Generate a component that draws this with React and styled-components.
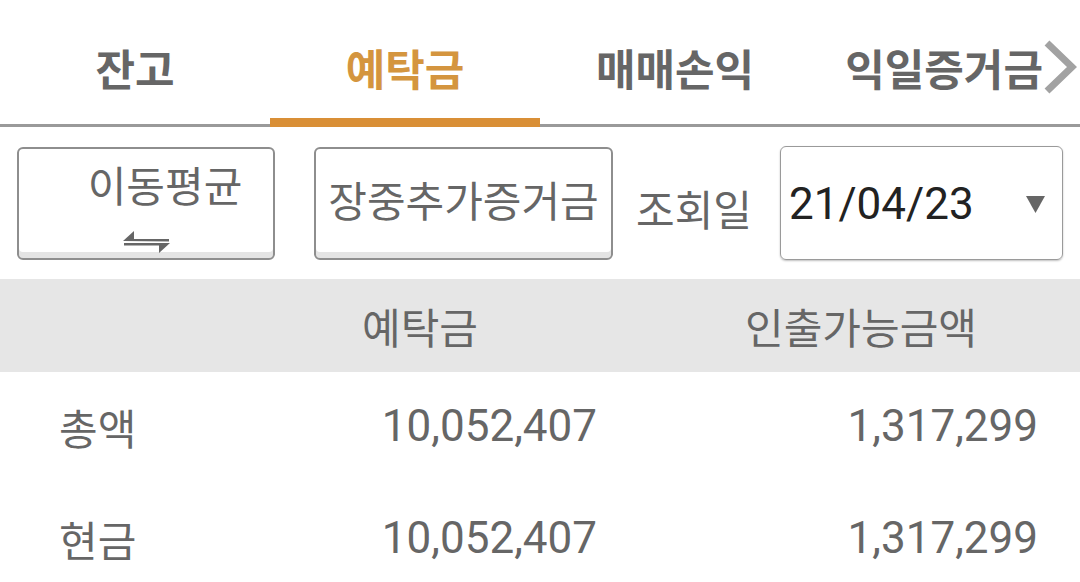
import { Fragment } from "react";
import styled, { createGlobalStyle } from "styled-components";

const GlobalStyle = createGlobalStyle`
  body {
    margin: 0;
    background: #fff;
    font-family: Roboto, "Noto Sans CJK KR", sans-serif;
  }
`;

const StyledPage = styled.div`
  width: 1080px;
  height: 582px;
  overflow: hidden;
  background: #fff;
`;

const StyledTabBar = styled.div`
  display: grid;
  grid-template-columns: repeat(4, 270px);
  height: 124px;
  border-bottom: 3px solid #9a9a9a;
`;

const StyledTab = styled.div`
  position: relative;
  display: flex;
  align-items: center;
  justify-content: ${(props) => (props.last ? "flex-end" : "center")};
  padding: 10px ${(props) => (props.last ? "3px" : "0")} 0 0;
  font-size: 43px;
  font-weight: 700;
  color: ${(props) => (props.active ? "#d4953f" : "#666")};

  &::after {
    content: "";
    display: ${(props) => (props.active ? "block" : "none")};
    position: absolute;
    left: 0;
    right: 0;
    bottom: -3px;
    height: 9px;
    background: #d98f36;
  }
`;

const StyledControls = styled.div`
  display: flex;
  align-items: center;
  padding: 19px 17px;
`;

const StyledButton = styled.div`
  box-sizing: border-box;
  width: ${(props) => props.width}px;
  height: 113px;
  margin-right: ${(props) => props.gap || 0}px;
  border: 2px solid #8e8e8e;
  border-radius: 6px;
  box-shadow: inset 0 -6px 0 #e4e4e4;
  display: flex;
  flex-direction: column;
  align-items: center;
  justify-content: ${(props) => (props.stacked ? "flex-start" : "center")};
  padding-top: ${(props) => (props.stacked ? 18 : 0)}px;
  font-size: 42px;
  color: #666;
  line-height: 1;

  & .label {
    padding-left: ${(props) => props.shift || 0}px;
  }

  & svg {
    margin-top: 22px;
  }
`;

const StyledDateLabel = styled.div`
  margin-left: 23px;
  font-size: 42px;
  color: #666;
  padding-top: 8px;
`;

const StyledDateBox = styled.div`
  box-sizing: border-box;
  margin-left: auto;
  width: 283px;
  height: 114px;
  border: 1px solid #9a9a9a;
  border-radius: 6px;
  box-shadow: 0 1px 2px rgba(0, 0, 0, 0.25);
  display: flex;
  align-items: center;
  justify-content: space-between;
  padding: 2px 17px 0 8px;
  font-size: 44px;
  color: #222;
`;

const StyledTable = styled.div`
  display: grid;
  grid-template-columns: 240px 360px 480px;
`;

const StyledHeadCell = styled.div`
  height: 93px;
  background: #e6e6e6;
  display: flex;
  align-items: center;
  justify-content: center;
  padding-left: ${(props) => props.pad || 0}px;
  font-size: 42px;
  color: #666;
`;

const StyledCell = styled.div`
  height: 112px;
  display: flex;
  align-items: center;
  justify-content: ${(props) => (props.label ? "flex-start" : "flex-end")};
  padding-left: ${(props) => (props.label ? 59 : 0)}px;
  padding-right: ${(props) => props.pad || 0}px;
  padding-bottom: 4px;
  box-sizing: border-box;
  font-size: ${(props) => (props.label ? 42 : 44)}px;
  color: #666;
`;

function Chevron() {
  return (
    <svg width="34" height="54" viewBox="0 0 34 54">
      <polyline points="4,3 29,27 4,51" fill="none" stroke="#a2a2a2" strokeWidth="7" />
    </svg>
  );
}

function SwapArrows() {
  return (
    <svg width="47" height="22" viewBox="0 0 47 22">
      <path d="M0 10 L11 0 L11 8 L46 8 L46 10.5 Z" fill="#666" />
      <path d="M1 12 L47 12 L36 22 L36 14.5 L1 14.5 Z" fill="#666" />
    </svg>
  );
}

function Caret() {
  return (
    <svg width="19" height="17" viewBox="0 0 19 17">
      <polygon points="0,0 19,0 9.5,17" fill="#666" />
    </svg>
  );
}

const rows = [
  { label: "총액", deposit: "10,052,407", withdraw: "1,317,299" },
  { label: "현금", deposit: "10,052,407", withdraw: "1,317,299" },
];

export default function App() {
  return (
    <StyledPage>
      <GlobalStyle />
      <StyledTabBar>
        <StyledTab>잔고</StyledTab>
        <StyledTab active>예탁금</StyledTab>
        <StyledTab>매매손익</StyledTab>
        <StyledTab last>
          익일증거금
          <Chevron />
        </StyledTab>
      </StyledTabBar>

      <StyledControls>
        <StyledButton width={258} gap={39} shift={38} stacked>
          <span className="label">이동평균</span>
          <SwapArrows />
        </StyledButton>
        <StyledButton width={299}>
          <span className="label">장중추가증거금</span>
        </StyledButton>
        <StyledDateLabel>조회일</StyledDateLabel>
        <StyledDateBox>
          <span>21/04/23</span>
          <Caret />
        </StyledDateBox>
      </StyledControls>

      <StyledTable>
        <StyledHeadCell />
        <StyledHeadCell>예탁금</StyledHeadCell>
        <StyledHeadCell pad={42}>인출가능금액</StyledHeadCell>
        {rows.map((row) => (
          <Fragment key={row.label}>
            <StyledCell label>{row.label}</StyledCell>
            <StyledCell pad={3}>{row.deposit}</StyledCell>
            <StyledCell pad={42}>{row.withdraw}</StyledCell>
          </Fragment>
        ))}
      </StyledTable>
    </StyledPage>
  );
}
